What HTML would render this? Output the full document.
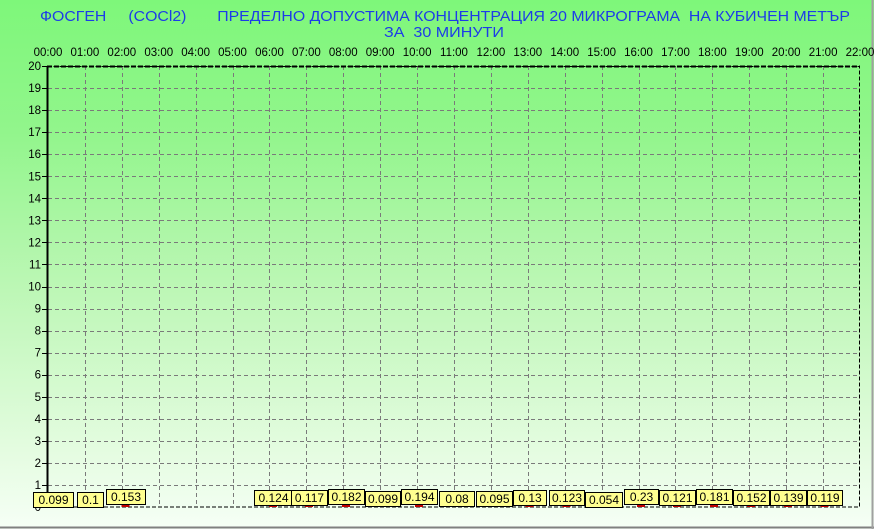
<!DOCTYPE html>
<html><head><meta charset="utf-8"><style>
html,body{margin:0;padding:0;width:874px;height:529px;overflow:hidden;}
svg{display:block;}
text{font-family:"Liberation Sans",sans-serif;}
</style></head><body>
<svg width="874" height="529" viewBox="0 0 874 529" xmlns="http://www.w3.org/2000/svg">
<defs>
<linearGradient id="bg" x1="0" y1="0" x2="0" y2="1">
<stop offset="0" stop-color="#7ef77a"/>
<stop offset="0.25" stop-color="#92f58c"/>
<stop offset="0.55" stop-color="#bdf7b6"/>
<stop offset="0.85" stop-color="#e4fce0"/>
<stop offset="1" stop-color="#f6fff6"/>
</linearGradient>
</defs>
<rect x="0" y="0" width="874" height="529" fill="url(#bg)"/>
<line x1="0" y1="527.5" x2="874" y2="527.5" stroke="#808080" stroke-width="2"/>
<line x1="872.5" y1="0" x2="872.5" y2="529" stroke="#a0a0a0" stroke-width="2"/>
<g fill="#1c3ce8" font-size="15">
<text x="40" y="21" textLength="810" lengthAdjust="spacingAndGlyphs" xml:space="preserve">ФОСГЕН     (COCl2)       ПРЕДЕЛНО ДОПУСТИМА КОНЦЕНТРАЦИЯ 20 МИКРОГРАМА  НА КУБИЧЕН МЕТЪР</text>
<text x="384" y="37" textLength="120" lengthAdjust="spacingAndGlyphs" xml:space="preserve">ЗА  30 МИНУТИ</text>
</g>
<g id="grid" stroke="#7a7a7a" stroke-width="1" stroke-dasharray="4,3" fill="none"></g>
<g id="lab" font-size="11.5" fill="#000"></g>
<script>
var ns="http://www.w3.org/2000/svg";
var g=document.getElementById('grid'),L=document.getElementById('lab');
function el(t,a,p,tx){var e=document.createElementNS(ns,t);for(var k in a)e.setAttribute(k,a[k]);if(tx!=null)e.textContent=tx;p.appendChild(e);return e;}
var x0=48,xs=(860-48)/22,y0=507,ys=22.05;
for(var i=1;i<22;i++){var x=Math.round(x0+xs*i)+0.5;el('line',{x1:x,y1:66,x2:x,y2:507},g);}
for(var j=1;j<20;j++){var y=Math.round(y0-ys*j)+0.5;el('line',{x1:48,y1:y,x2:860,y2:y},g);}
for(var i=0;i<=22;i++){var h=(i<10?'0':'')+i+':00';el('text',{x:x0+xs*i,y:56,'text-anchor':'middle'},L,h);}
for(var j=0;j<=20;j++){var y=y0-ys*j;el('text',{x:41,y:y+4,'text-anchor':'end'},L,''+j);el('line',{x1:42,y1:Math.round(y)+0.5,x2:47,y2:Math.round(y)+0.5,stroke:'#000'},L);}
</script>
<rect x="47.5" y="66.5" width="812" height="440.5" fill="none" stroke="#000" stroke-width="1" stroke-dasharray="4,2"/>
<line x1="47.5" y1="66" x2="47.5" y2="508" stroke="#000" stroke-width="2"/>
<line x1="47" y1="66.5" x2="860" y2="66.5" stroke="#000" stroke-width="2" stroke-dasharray="5,2"/>
<g id="boxes" font-size="12"></g>
<script>
var B=document.getElementById('boxes');
var d=[[33,73,492,"0.099"],[77,103,492,"0.1"],[106,145,489,"0.153"],[254,292,490,"0.124"],[291,327,490,"0.117"],[328,364,489,"0.182"],[365,400,491,"0.099"],[401,437,489,"0.194"],[439,474,491,"0.08"],[476,512,491,"0.095"],[513,546,490,"0.13"],[549,584,490,"0.123"],[585,622,492,"0.054"],[624,658,489,"0.23"],[659,695,490,"0.121"],[696,732,489,"0.181"],[733,769,490,"0.152"],[770,806,490,"0.139"],[807,842,490,"0.119"]];
d.forEach(function(b){var cx=(b[0]+b[1])/2;el('rect',{x:cx-4,y:504,width:8,height:3,fill:'#c00000'},B);
el('rect',{x:b[0]+0.5,y:b[2]+0.5,width:b[1]-b[0],height:15,fill:'#ffff90',stroke:'#000'},B);
el('text',{x:cx+0.5,y:b[2]+12,'text-anchor':'middle'},B,b[3]);});
</script>
</svg>
</body></html>
